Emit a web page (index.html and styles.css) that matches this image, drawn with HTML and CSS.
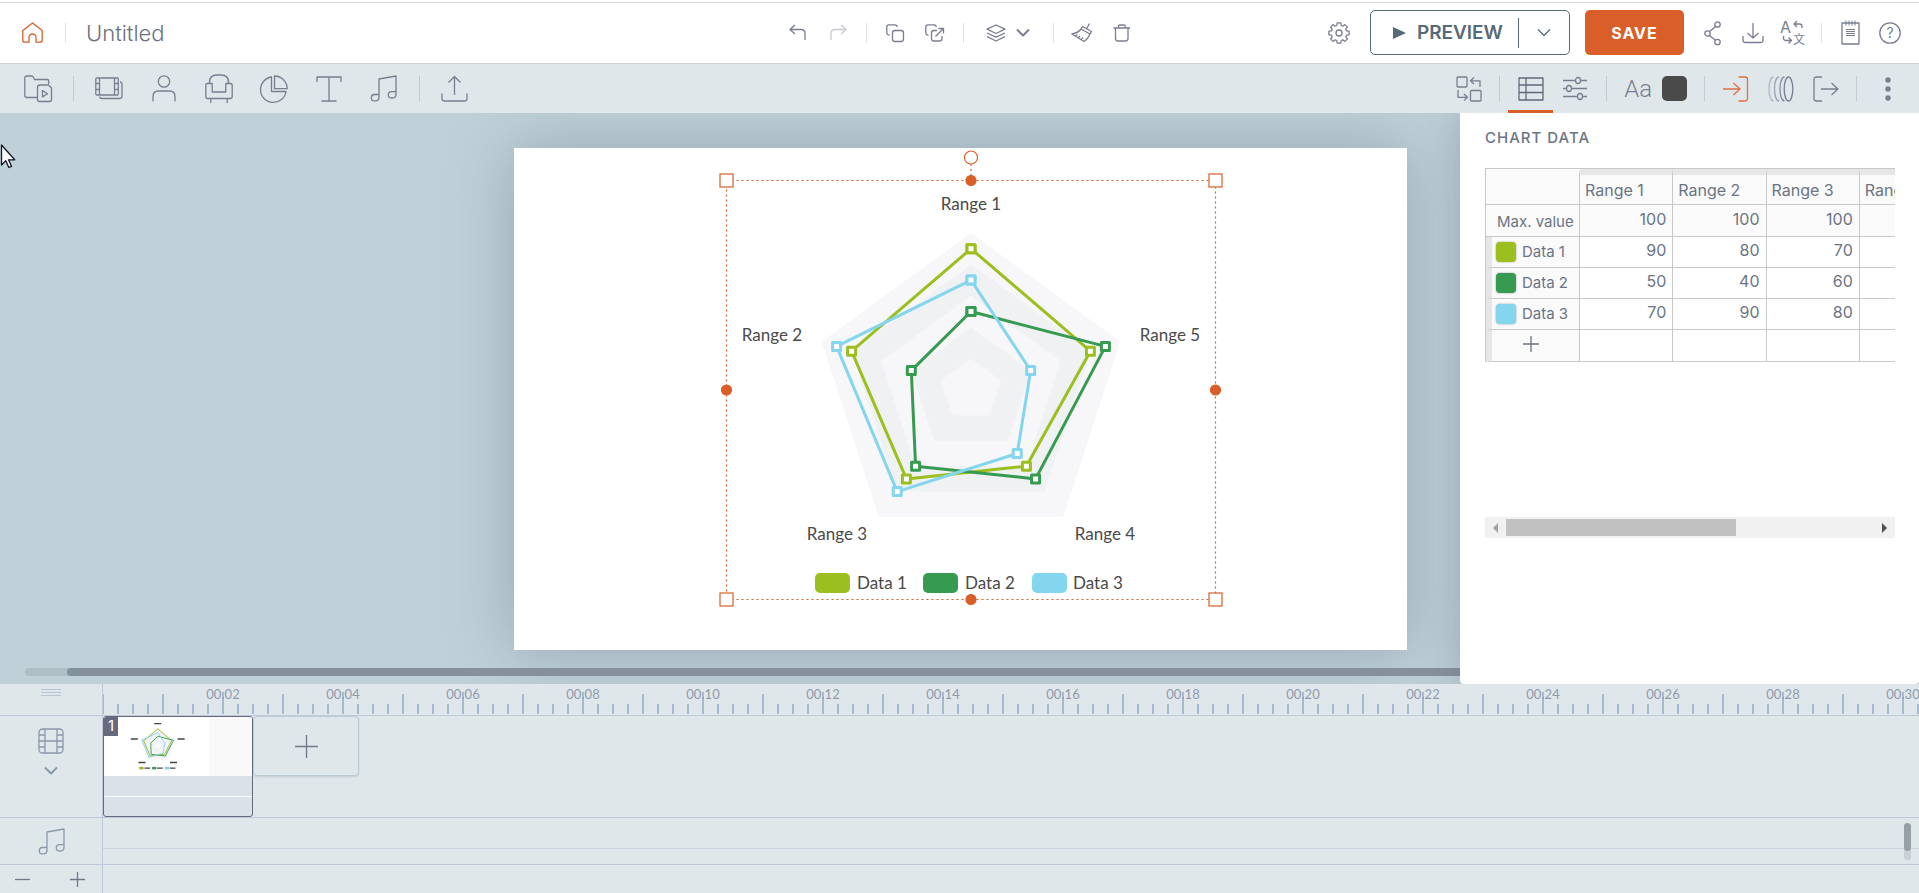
FILE: index.html
```html
<!DOCTYPE html>
<html lang="en">
<head>
    <meta charset="UTF-8">
    <title>Untitled</title>
    <link rel="stylesheet" href="styles.css">
</head>
<body>
    <div class="app">
        <header class="header">
            <div class="header-side">
                <a href="#" class="home" aria-label="Home">
                    <svg width="21" height="21"><path d="M3 20.2q-2.2 0-2.2-2V8.5L10.5 1l9.7 7.5v9.7q0 2-2 2H14V15.5a3.5 3.5 0 0 0-7 0v4.7Z"/></svg>
                </a>
                <span class="line"></span>
                <input class="title" type="text" value="Untitled" aria-label="Project title">
            </div>
            <div class="header-tools">
                <button class="btn" aria-label="Undo"><svg width="18" height="18"><path d="M6 1 1 5.5 6 10M1 5.5h11q4 0 4 4V16"/></svg></button>
                <button class="btn disabled" aria-label="Redo"><svg width="18" height="18"><path d="m12 1 5 4.5-5 4.5M17 5.5H6q-4 0-4 4V16"/></svg></button>
                <span class="line"></span>
                <button class="btn" aria-label="Copy"><svg width="18" height="18"><rect x="6.500" y="6.5" width="11" height="11" rx="2.5"/><path d="M3.5 11q-2.7 0-2.7-2.500V3q0-2.200 2.200-2.200h6q2.200 0 2.200 2.200"/></svg></button>
                <button class="btn" aria-label="Duplicate"><svg width="20" height="18"><path d="M3.5 11q-2.7 0-2.7-2.500V3q0-2.200 2.200-2.200h6q2.200 0 2.200 2.200M12 6.500H9Q6.500 6.500 6.500 9v5.500Q6.500 17 9 17h5.500q2.500 0 2.500-2.500V12M10.500 12.500l8-8M13.500 4.500h5v5"/></svg></button>
                <span class="line"></span>
                <button class="btn btn-layers" aria-label="Layers">
                    <svg width="20" height="18"><path d="m10 1 9 4.200-9 4.300-9-4.300ZM1 9l9 4.200L19 9M1 12.700 10 17l9-4.300"/></svg>
                    <svg class="thick" width="14" height="9"><path d="m1 1.500 6 6 6-6"/></svg>
                </button>
                <span class="line"></span>
                <button class="btn" aria-label="Clear"><svg width="22" height="20"><path d="m18.500.500-3 5.500M11.500 3.500l9 5-1.500 2.500-9-5ZM10 6Q7 10 .800 11L13 18.500q4-2.500 6-7.500M4 13l2.500-1.500M7 15l2-2M10 16.700l2-2.200"/></svg></button>
                <button class="btn" aria-label="Delete"><svg width="18" height="18"><path d="M.500 4h16.500M2.500 4v10.500Q2.500 17 5 17h7.500q2.500 0 2.500-2.500V4M5.500 4V2.300Q5.500 1 6.800 1h4q1.300 0 1.300 1.300V4"/></svg></button>
            </div>
            <div class="header-side header-right">
                <button class="btn btn-gear" aria-label="Settings"><svg width="22" height="22"><path d="M21.100 9.200v3.600l-2.600.4-.7 1.600 1.600 2.100-2.500 2.500-2.100-1.600-1.600.7-.4 2.600H9.200l-.4-2.600-1.600-.7-2.100 1.600-2.500-2.500 1.600-2.100-.7-1.600-2.600-.4V9.200l2.600-.4.7-1.600-1.600-2.100 2.500-2.500 2.100 1.600 1.600-.7.4-2.600h3.600l.4 2.600 1.600.7 2.100-1.600 2.500 2.500-1.600 2.100.7 1.600Z"/><circle cx="11" cy="11" r="3"/></svg></button>
                <div class="preview">
                    <button class="preview-main"><svg width="13" height="12"><path class="solid" d="M0 0 13 6 0 12Z"/></svg>PREVIEW</button>
                    <button class="preview-more" aria-label="Preview options"><svg width="14" height="9"><path d="m1 1.500 6 6 6-6"/></svg></button>
                </div>
                <button class="save">SAVE</button>
                <button class="btn" aria-label="Share"><svg width="18" height="24"><circle cx="13.5" cy="3.5" r="2.7"/><circle cx="3.5" cy="12.5" r="2.7"/><circle cx="13.5" cy="21" r="2.7"/><path d="m5.500 10.500 6-5M5.500 14.500l6 4.700"/></svg></button>
                <button class="btn" aria-label="Download"><svg width="22" height="22"><path d="M1 14v4q0 2.500 2.500 2.500h15q2.500 0 2.500-2.500v-4M11 1v15M5.500 11l5.500 5 5.500-5"/></svg></button>
                <button class="btn" aria-label="Translate"><svg width="26" height="26"><text class="glyph" x="0" y="13">A</text><text class="glyph-cjk" x="13" y="24">文</text><path d="M22 8V6.500Q22 4 19.500 4H14M17 1l-3 3 3 3M3.500 16v2q0 2.500 2.500 2.500h5M8.500 17.500l3 3-3 3"/></svg></button>
                <span class="line"></span>
                <button class="btn" aria-label="Notes"><svg width="19" height="25"><path d="M1 3h17v21H1Z"/><path class="fine" d="M5 .5v5M8 .5v5M11 .5v5M14 .5v5M5 9.500h9M5 11.500h9M5 13.500h9M5 15.500h9"/></svg></button>
                <button class="btn" aria-label="Help"><svg width="22" height="22"><circle cx="11" cy="11" r="10.2"/><text class="glyph-help" x="11" y="16">?</text></svg></button>
            </div>
        </header>

        <div class="toolbar">
            <div class="toolbar-group toolbar-left">
                <button class="tool" aria-label="Templates"><svg width="28" height="28"><path d="M13 22.500H3q-2.200 0-2.200-2V3Q.8 1 3 1h4.500q1.500 0 2 1.500l1 2H23q1.700 0 1.700 1.700V9M16 10h8.500l3 3v11.500q0 2-2 2H15.500q-2 0-2-2V12.500q0-2.500 2.500-2.500ZM18.500 15.500l5 3.200-5 3.200Z"/></svg></button>
                <span class="line"></span>
                <button class="tool" aria-label="Scenes"><svg width="28" height="24"><rect x=".8" y="1" width="22.5" height="17" rx="1"/><path d="M4.500 1v17M19.500 1v17M.8 6.500h3.700M.8 12.500h3.700M19.500 6.500h3.700M19.500 12.500h3.700M25 5q2 0 2 2v12q0 2.500-2.500 2.500H7q-2 0-2.500-1.700"/></svg></button>
                <button class="tool" aria-label="Characters"><svg width="24" height="27"><circle cx="12" cy="6.5" r="5.7"/><path d="M1 26.500v-5Q1 16 6.500 16h11q5.500 0 5.500 5.500v5"/></svg></button>
                <button class="tool" aria-label="Properties"><svg width="28" height="29"><path d="M4.500 9.500V8.200Q4.500 1 11.700 1h4.600q7.200 0 7.200 7.200v1.300M2.500 9.500h4.700V18h13.600V9.500h4.700q1.700 0 1.700 1.700v11.300q0 2-2 2H2.800q-2 0-2-2V11.200q0-1.700 1.700-1.700ZM5.800 24.500V29M22.200 24.500V29"/></svg></button>
                <button class="tool" aria-label="Charts"><svg width="28" height="28"><path d="M11.500 2A12.800 12.800 0 1 0 26 16.500H11.500ZM14.500 1v12.700h12.700A12.700 12.700 0 0 0 14.500 1Z"/></svg></button>
                <button class="tool" aria-label="Text"><svg width="26" height="26"><path d="M1 6V1h24v5M13 1v24M5.500 25h15"/></svg></button>
                <button class="tool" aria-label="Music"><svg width="27" height="27"><path id="note" d="M9 19.500H4.500a3.200 3.200 0 0 0 0 6.400h1Q9 25.900 9 22V4L26 1v18q0 4-3.500 4h-1a3.200 3.200 0 0 1 0-6.400H26"/></svg></button>
                <span class="line"></span>
                <button class="tool" aria-label="Upload"><svg width="28" height="28"><path d="M1 18.500v5Q1 26 3.500 26h20q2.500 0 2.500-2.500v-5M13.500 20V1.500M7.500 7.500l6-6 6 6"/></svg></button>
            </div>
            <div class="toolbar-group toolbar-right">
                <button class="tool" aria-label="Swap"><svg width="26" height="26"><rect x="1" y="1" width="10" height="10" rx="1"/><rect x="14.5" y="14.5" width="10.5" height="10.5" rx="1"/><path d="M24 11V4.800h-9.500M18 1.500l-3.500 3.300L18 8M2 14v7.300h9.500M8 18l3.500 3.300L8 24.600"/></svg></button>
                <span class="line"></span>
                <button class="tool active" aria-label="Chart data"><svg width="26" height="24"><path d="M1 1h24v22H1ZM8 1v22M1 8h24M1 15.500h24"/></svg></button>
                <button class="tool" aria-label="Chart settings"><svg width="25" height="25"><path d="M0 4.500h12.500M17.500 4.500H24M0 12.500h3.500M8.500 12.500H24M0 20.500h14.500M19.500 20.500H24"/><ellipse cx="15" cy="4.5" rx="2.5" ry="3"/><ellipse cx="6" cy="12.5" rx="2.5" ry="3"/><ellipse cx="17" cy="20.5" rx="2.5" ry="3"/></svg></button>
                <span class="line"></span>
                <div class="text-style">
                    <button class="font-btn" aria-label="Font">Aa</button>
                    <button class="color-btn" aria-label="Text color"></button>
                </div>
                <span class="line"></span>
                <button class="tool enter" aria-label="Enter effect"><svg width="26" height="26"><path d="M15.500 1H22q2.500 0 2.500 2.500v19Q24.500 25 22 25h-6.500M0 13h17M10.500 7l6.500 6-6.500 6"/></svg></button>
                <button class="tool" aria-label="Motion effect"><svg width="28" height="26"><ellipse cx="21.5" cy="13" rx="4.3" ry="12"/><path opacity=".85" d="M17.500 1c-6 0-6 24 0 24"/><path opacity=".65" d="M12 1c-6 0-6 24 0 24"/><path opacity=".45" d="M6.500 1c-6 0-6 24 0 24"/></svg></button>
                <button class="tool" aria-label="Exit effect"><svg width="26" height="26"><path d="M9 1H3.500Q1 1 1 3.500v19Q1 25 3.500 25H9M8 13h17M18.500 7l6.500 6-6.500 6"/></svg></button>
                <span class="line"></span>
                <button class="tool" aria-label="More"><svg width="6" height="24"><circle class="solid" cx="3" cy="3" r="2.7"/><circle class="solid" cx="3" cy="12" r="2.7"/><circle class="solid" cx="3" cy="21" r="2.7"/></svg></button>
            </div>
        </div>

        <main class="stage">
            <div class="canvas">
                <svg class="chart" viewBox="0 0 893 502">
                    <defs>
                        <marker id="dot1" markerUnits="userSpaceOnUse" markerWidth="12" markerHeight="12" refX="6" refY="6"><rect x="2" y="2" width="8" height="8" fill="#fff" stroke="#9bbf1e" stroke-width="3"/></marker>
                        <marker id="dot2" markerUnits="userSpaceOnUse" markerWidth="12" markerHeight="12" refX="6" refY="6"><rect x="2" y="2" width="8" height="8" fill="#fff" stroke="#369a50" stroke-width="3"/></marker>
                        <marker id="dot3" markerUnits="userSpaceOnUse" markerWidth="12" markerHeight="12" refX="6" refY="6"><rect x="2" y="2" width="8" height="8" fill="#fff" stroke="#84d5ee" stroke-width="3"/></marker>
                    </defs>
                    <g id="radar">
                        <polygon class="ring-light" points="457,85 606.3,193.5 549.3,369 364.7,369 307.7,193.5"/>
                        <polygon class="ring-dark" points="457,116.4 576.4,203.2 530.8,343.6 383.2,343.6 337.6,203.2"/>
                        <polygon class="ring-light" points="457,147.8 546.6,212.9 512.4,318.2 401.6,318.2 367.4,212.9"/>
                        <polygon class="ring-dark" points="457,179.2 516.7,222.6 493.9,292.8 420.1,292.8 397.3,222.6"/>
                        <polygon class="ring-light" points="457,210.6 486.9,232.3 475.5,267.4 438.5,267.4 427.1,232.3"/>
                        <polygon class="series series1" points="457,100.7 576.4,203.2 512.4,318.2 392.4,330.9 337.6,203.2"/>
                        <polygon class="series series2" points="457,163.5 591.4,198.4 521.6,330.9 401.6,318.2 397.3,222.6"/>
                        <polygon class="series series3" points="457,132.1 516.7,222.6 503.2,305.5 383.2,343.6 322.6,198.4"/>
                        <rect x="301" y="425" width="35" height="20" rx="5" fill="#9bbf1e"/>
                        <rect x="409" y="425" width="35" height="20" rx="5" fill="#369a50"/>
                        <rect x="518" y="425" width="35" height="20" rx="5" fill="#84d5ee"/>
                    </g>
                    <g class="axis">
                        <text x="457" y="62">Range 1</text>
                        <text x="258" y="193">Range 2</text>
                        <text x="323" y="392">Range 3</text>
                        <text x="591" y="392">Range 4</text>
                        <text x="656" y="193">Range 5</text>
                    </g>
                    <g class="legend">
                        <text x="343" y="441">Data 1</text>
                        <text x="451" y="441">Data 2</text>
                        <text x="559" y="441">Data 3</text>
                    </g>
                    <g class="selection">
                        <rect class="dotted" x="212.5" y="32.5" width="489" height="419"/>
                        <path class="dotted" d="M457 16v14"/>
                        <rect x="206" y="26" width="13" height="13"/>
                        <rect x="695" y="26" width="13" height="13"/>
                        <rect x="206" y="445" width="13" height="13"/>
                        <rect x="695" y="445" width="13" height="13"/>
                        <circle cx="457" cy="9.5" r="6.5"/>
                        <circle class="knob" cx="457" cy="32.5" r="5"/>
                        <circle class="knob" cx="212.5" cy="242" r="5"/>
                        <circle class="knob" cx="701.5" cy="242" r="5"/>
                        <circle class="knob" cx="457" cy="451.5" r="5"/>
                    </g>
                </svg>
            </div>
            <div class="stage-scroll"><div class="stage-thumb"></div></div>

            <aside class="panel">
                <h2>CHART DATA</h2>
                <div class="sheet">
                    <table>
                        <colgroup><col class="col-name"><col><col><col><col></colgroup>
                        <tr class="row-head"><th></th><th>Range 1</th><th>Range 2</th><th>Range 3</th><th>Range 4</th></tr>
                        <tr class="row-max"><th>Max. value</th><td>100</td><td>100</td><td>100</td><td></td></tr>
                        <tr class="row-data"><th><span class="cell"><button class="swatch swatch1" aria-label="Data 1 color"></button>Data 1</span></th><td>90</td><td>80</td><td>70</td><td></td></tr>
                        <tr class="row-data"><th><span class="cell"><button class="swatch swatch2" aria-label="Data 2 color"></button>Data 2</span></th><td>50</td><td>40</td><td>60</td><td></td></tr>
                        <tr class="row-data"><th><span class="cell"><button class="swatch swatch3" aria-label="Data 3 color"></button>Data 3</span></th><td>70</td><td>90</td><td>80</td><td></td></tr>
                        <tr class="row-data row-add"><th><button class="add-row" aria-label="Add row"><svg width="16" height="16"><path d="M8 0v16M0 8h16"/></svg></button></th><td></td><td></td><td></td><td></td></tr>
                    </table>
                </div>
                <div class="sheet-scroll">
                    <button class="arrow arrow-left" aria-label="Scroll left"><svg width="5" height="10"><path class="solid" d="M5 0v10L0 5Z"/></svg></button>
                    <div class="sheet-track"><div class="sheet-thumb"></div></div>
                    <button class="arrow" aria-label="Scroll right"><svg width="5" height="10"><path class="solid" d="M0 0v10l5-5Z"/></svg></button>
                </div>
            </aside>
        </main>

        <section class="timeline">
            <div class="side side-ruler"><svg width="20" height="8"><path d="M0 .5h20M0 3.500h20M0 6.500h20"/></svg></div>
            <div class="ruler">
                <span>00:02</span><span>00:04</span><span>00:06</span><span>00:08</span><span>00:10</span>
                <span>00:12</span><span>00:14</span><span>00:16</span><span>00:18</span><span>00:20</span>
                <span>00:22</span><span>00:24</span><span>00:26</span><span>00:28</span><span>00:30</span>
            </div>

            <div class="side side-scenes">
                <svg width="26" height="26"><rect x="1" y="1" width="24" height="24" rx="3.5"/><path d="M7 1v24M19 1v24M7 13h12M1 7h6M1 13h6M1 19h6M19 7h6M19 13h6M19 19h6"/></svg>
                <button class="expand" aria-label="Expand"><svg class="thick" width="14" height="9"><path d="m1 1.500 6 6 6-6"/></svg></button>
            </div>
            <div class="scenes">
                <div class="scene">
                    <div class="scene-top">
                        <svg class="thumb" viewBox="0 0 893 502" aria-hidden="true">
                            <use href="#radar"/>
                            <path class="thumb-labels" d="M427 56h60M228 187h60M293 387h60M561 387h60M626 187h60M344 435h48M452 435h48M560 435h48"/>
                        </svg>
                        <span class="badge">1</span>
                    </div>
                    <div class="scene-track"></div>
                    <div class="scene-track"></div>
                </div>
                <button class="add-scene" aria-label="Add scene"><svg width="23" height="23"><path d="M11.500 0v23M0 11.500h23"/></svg></button>
            </div>

            <div class="side side-audio"><svg width="27" height="27"><use href="#note"/></svg></div>
            <div class="audio">
                <div class="audio-lane"></div>
                <div class="audio-scroll"><div class="audio-thumb"></div></div>
            </div>

            <div class="side side-zoom">
                <button aria-label="Zoom out"><svg width="15" height="15"><path d="M0 7.500h15"/></svg></button>
                <button aria-label="Zoom in"><svg width="15" height="15"><path d="M0 7.500h15M7.500 0v15"/></svg></button>
            </div>
            <div class="footer"></div>
        </section>
    </div>

    <svg class="cursor" width="17" height="25"><path d="M1.500 1v20l4.300-4.200 3 6.700 2.700-1.200-3-6.500h6.200Z"/></svg>
</body>
</html>
```
FILE: styles.css
```css
* {
    box-sizing: border-box;
}
body {
    margin: 0;
    overflow: hidden;
    font-family: Inter, "Liberation Sans", sans-serif;
    color: #6b7485;
}
button {
    margin: 0;
    padding: 0;
    border: 0;
    background: none;
    color: inherit;
    font-family: inherit;
    cursor: pointer;
}
svg {
    display: block;
    flex: none;
    overflow: visible;
    fill: none;
    stroke: currentColor;
    stroke-width: 1.3;
    stroke-linejoin: round;
}
.solid {
    fill: currentColor;
    stroke: none;
}
.thick {
    stroke-width: 2;
}
.fine {
    stroke-width: 1;
}
.app {
    display: flex;
    flex-direction: column;
    height: 100vh;
}
.line {
    flex: none;
    width: 1px;
    height: 20px;
    margin: 0 8px;
    background: #dfe1e4;
}

/* header */
.header {
    flex: none;
    display: flex;
    align-items: center;
    height: 64px;
    padding-top: 2px;
    border-bottom: 1px solid #cdd3d6;
    background: linear-gradient(#fff 2px, #dadada 2px, #dadada 3px, #fff 3px);
    color: #7a7d90;
}
.header-side {
    flex: 1;
    display: flex;
    align-items: center;
    padding: 0 9px;
}
.header-right {
    justify-content: flex-end;
}
.header-tools {
    display: flex;
    align-items: center;
}
.home {
    margin: 0 14px 0 13px;
    color: #d95e27;
}
.title {
    width: 240px;
    margin-left: 12px;
    padding: 0;
    border: 0;
    outline: 0;
    background: none;
    font-family: inherit;
    font-size: 22px;
    font-weight: 300;
    color: #6b7082;
}
.btn {
    display: flex;
    align-items: center;
    justify-content: center;
    width: 40px;
    height: 40px;
}
.disabled {
    opacity: .4;
}
.btn-layers {
    gap: 10px;
    width: 73px;
}
.btn-gear {
    margin-right: 11px;
}
.preview {
    display: flex;
    align-items: center;
    height: 45px;
    margin-right: 15px;
    border: 1px solid #576a77;
    border-radius: 5px;
    color: #576a77;
}
.preview-main {
    display: flex;
    align-items: center;
    gap: 11px;
    height: 30px;
    padding: 0 15px 0 22px;
    border-right: 1px solid #576a77;
    font-size: 19px;
    font-weight: 600;
}
.preview-more {
    display: flex;
    justify-content: center;
    width: 50px;
}
.save {
    width: 99px;
    height: 45px;
    margin-right: 9px;
    border-radius: 5px;
    background: #d95e27;
    color: #fff;
    font-size: 16px;
    font-weight: 700;
    letter-spacing: 1px;
}
.glyph, .glyph-cjk, .glyph-help {
    fill: currentColor;
    stroke: none;
    font-size: 16px;
}
.glyph-cjk {
    font-family: "Noto Sans CJK SC", sans-serif;
    font-size: 12px;
}
.glyph-help {
    font-size: 14px;
    text-anchor: middle;
}

/* toolbar */
.toolbar {
    flex: none;
    display: flex;
    justify-content: space-between;
    height: 49px;
    background: #e0e7ea;
    color: #7a7d90;
}
.toolbar-group {
    display: flex;
    align-items: center;
}
.toolbar .line {
    height: 25px;
    background: #c6cbd1;
}
.tool {
    display: flex;
    align-items: center;
    justify-content: center;
    width: 55px;
    height: 48px;
}
.toolbar-left {
    padding-left: 10px;
}
.toolbar-left .line {
    margin-right: 7px;
}
.toolbar-right {
    padding-right: 9px;
}
.toolbar-right .tool {
    width: 45px;
}
.toolbar-right .active {
    height: 49px;
    border-top: 3px solid transparent;
    border-bottom: 3px solid #d95e27;
    color: #64677b;
}
.toolbar-right .enter {
    color: #dd7245;
}
.text-style {
    display: flex;
    align-items: center;
    gap: 10px;
    padding: 0 9px;
}
.font-btn {
    font-family: Roboto, sans-serif;
    font-size: 24px;
    font-weight: 300;
}
.color-btn {
    width: 25px;
    height: 25px;
    border-radius: 5px;
    background: #4a4a4a;
}

/* stage */
.stage {
    position: relative;
    flex: 1;
    padding: 35px 0 0 2px;
    overflow: hidden;
    background: #bfd0d8;
}
.canvas {
    width: 893px;
    max-width: 94%;
    margin: 0 auto;
    background: #fff;
    box-shadow: 0 0 60px rgba(90, 105, 125, .4);
}
.chart {
    width: 100%;
    stroke: none;
}
.chart text {
    font-family: Lato, sans-serif;
    font-size: 17px;
    fill: #4a4a4a;
}
.axis {
    text-anchor: middle;
}
.ring-light {
    fill: #f7f7fa;
    stroke: none;
}
.ring-dark {
    fill: #eff1f3;
    stroke: none;
}
.series {
    fill: none;
    stroke-width: var(--series-width, 3px);
}
.series1 {
    stroke: #9bbf1e;
    marker: url(#dot1);
}
.series2 {
    stroke: #369a50;
    marker: url(#dot2);
}
.series3 {
    stroke: #84d5ee;
    marker: url(#dot3);
}
.selection {
    fill: #fff;
    stroke: #d95e27;
    stroke-width: 1.2;
    stroke-linejoin: miter;
}
.dotted {
    fill: none;
    stroke-dasharray: 2 3;
}
.knob {
    fill: #d95e27;
}
.stage-scroll {
    position: absolute;
    left: 25px;
    right: 0;
    bottom: 8px;
    height: 8px;
    border-radius: 4px;
    background: #adbec5;
}
.stage-thumb {
    height: 8px;
    margin-left: 42px;
    border-radius: 4px;
    background: #85919a;
}

/* chart data panel */
.panel {
    position: absolute;
    top: 0;
    right: 0;
    bottom: 0;
    width: 459px;
    padding: 15px 24px 0 25px;
    border-radius: 0 0 4px 4px;
    background: #fff;
    box-shadow: 0 0 40px rgba(90, 105, 125, .4);
}
.panel h2 {
    margin: 0 0 20px;
    font-size: 15px;
    line-height: 20px;
    font-weight: 500;
    letter-spacing: 1px;
}
.sheet {
    height: 349px;
    overflow: hidden;
}
.sheet table {
    width: 468px;
    table-layout: fixed;
    border-collapse: separate;
    border-spacing: 0;
    border-top: 1px solid #c8c8c8;
    border-left: 1px solid #c8c8c8;
    font-size: 16px;
}
.col-name {
    width: 94px;
}
.sheet th, .sheet td {
    height: 31px;
    padding: 0;
    border-right: 1px solid #c8c8c8;
    border-bottom: 1px solid #c8c8c8;
    line-height: 20px;
    font-weight: 400;
    text-align: left;
    white-space: nowrap;
}
.sheet th {
    background: #fafafa;
}
.sheet td {
    padding: 0 6px 4px 0;
    text-align: right;
}
.sheet .row-head th {
    height: 36px;
    padding: 0 0 0 5px;
    border-top: 6px solid #e6e6e6;
}
.sheet .row-head th:first-child {
    border-top-color: #fafafa;
}
.sheet .row-max th, .sheet .row-max td {
    height: 32px;
    background: #fafafa;
}
.sheet .row-max th {
    padding: 2px 0 0 11px;
    font-size: 15px;
}
.sheet .row-data th {
    border-left: 6px solid #e6e6e6;
    font-size: 15px;
}
.sheet .row-add th {
    height: 32px;
    padding-top: 2px;
}
.cell {
    display: flex;
    align-items: center;
    gap: 6px;
    padding-left: 4px;
}
.swatch {
    width: 20px;
    height: 20px;
    border-radius: 4px;
    box-shadow: 0 0 2px rgba(0, 0, 0, .4);
}
.swatch1 {
    background: #9bbf1e;
}
.swatch2 {
    background: #369a50;
}
.swatch3 {
    background: #84d5ee;
}
.add-row {
    padding: 0 31px;
}
.sheet-scroll {
    display: flex;
    align-items: center;
    height: 21px;
    background: #f1f1f1;
}
.arrow {
    display: flex;
    justify-content: center;
    width: 21px;
    color: #505050;
}
.arrow-left {
    color: #a3a3a3;
}
.sheet-track {
    flex: 1;
}
.sheet-thumb {
    width: 62.5%;
    height: 17px;
    background: #c1c1c1;
}

/* timeline */
.timeline {
    flex: none;
    display: grid;
    grid-template-columns: 103px 1fr;
    grid-template-rows: 32px 102px 47px 28px;
    background: #e0e7ea;
}
.side {
    display: flex;
    border-right: 1px solid #bfc9d9;
    border-bottom: 1px solid #bfc9d9;
    color: #8a98ab;
}
.side-ruler {
    justify-content: center;
    padding-top: 5px;
    color: #b7c4d6;
}
.side-ruler svg {
    stroke-width: 1;
}
.ruler {
    display: flex;
    padding-left: 60px;
    overflow: hidden;
    border-bottom: 1px solid #bfc9d9;
    background-image: linear-gradient(to right, #a4bad3 2px, transparent 2px), linear-gradient(to right, #a4bad3 2px, transparent 2px);
    background-size: 60px 20px, 15px 10px;
    background-position: -1px 10px, -1px 20px;
    background-repeat: repeat-x;
}
.ruler span {
    flex: none;
    width: 120px;
    font-family: Lato, sans-serif;
    font-size: 13px;
    line-height: 20px;
    text-align: center;
    color: #8e99aa;
}
.side-scenes {
    flex-direction: column;
    align-items: center;
    gap: 12px;
    padding-top: 12px;
}
.scenes {
    display: flex;
    align-items: flex-start;
    border-bottom: 1px solid #bfc9d9;
}
.scene {
    width: 150px;
    height: 101px;
    border: 1px solid #676a7d;
    border-radius: 3px;
    overflow: hidden;
    background: #dae1e9;
}
.scene-top {
    position: relative;
    height: 59px;
    background: linear-gradient(to right, #fff 105px, #f9f9f9 105px);
}
.thumb {
    --series-width: 8px;
    width: 105px;
    height: 59px;
}
.thumb .thumb-labels {
    stroke: #444;
    stroke-width: 12;
}
.badge {
    position: absolute;
    top: 0;
    left: 0;
    width: 14px;
    height: 19px;
    background: #676a7d;
    color: #fff;
    font-size: 15px;
    line-height: 18px;
    text-align: center;
}
.scene-track {
    height: 21px;
    border-bottom: 1px solid #fff;
}
.add-scene {
    display: flex;
    align-items: center;
    justify-content: center;
    width: 106px;
    height: 60px;
    border: 1px solid #bccbd4;
    border-radius: 4px;
    color: #74778a;
    box-shadow: 0 1px 2px rgba(90, 105, 125, .2);
}
.side-audio {
    justify-content: center;
    align-items: center;
}
.audio {
    position: relative;
    border-bottom: 1px solid #bfc9d9;
}
.audio-lane {
    height: 31px;
    border-bottom: 1px solid #ccd4e2;
}
.audio-scroll {
    position: absolute;
    top: 5px;
    right: 8px;
    width: 7px;
    height: 37px;
    border-radius: 4px;
    background: #c9d1d6;
}
.audio-thumb {
    height: 28px;
    border-radius: 4px;
    background: #98a0a7;
}
.side-zoom {
    justify-content: space-between;
    align-items: center;
    padding: 0 17px 0 15px;
    border-bottom: 0;
    color: #74778a;
}

.cursor {
    position: absolute;
    top: 144px;
    left: 0;
    fill: #fff;
    stroke: #111827;
}
```
